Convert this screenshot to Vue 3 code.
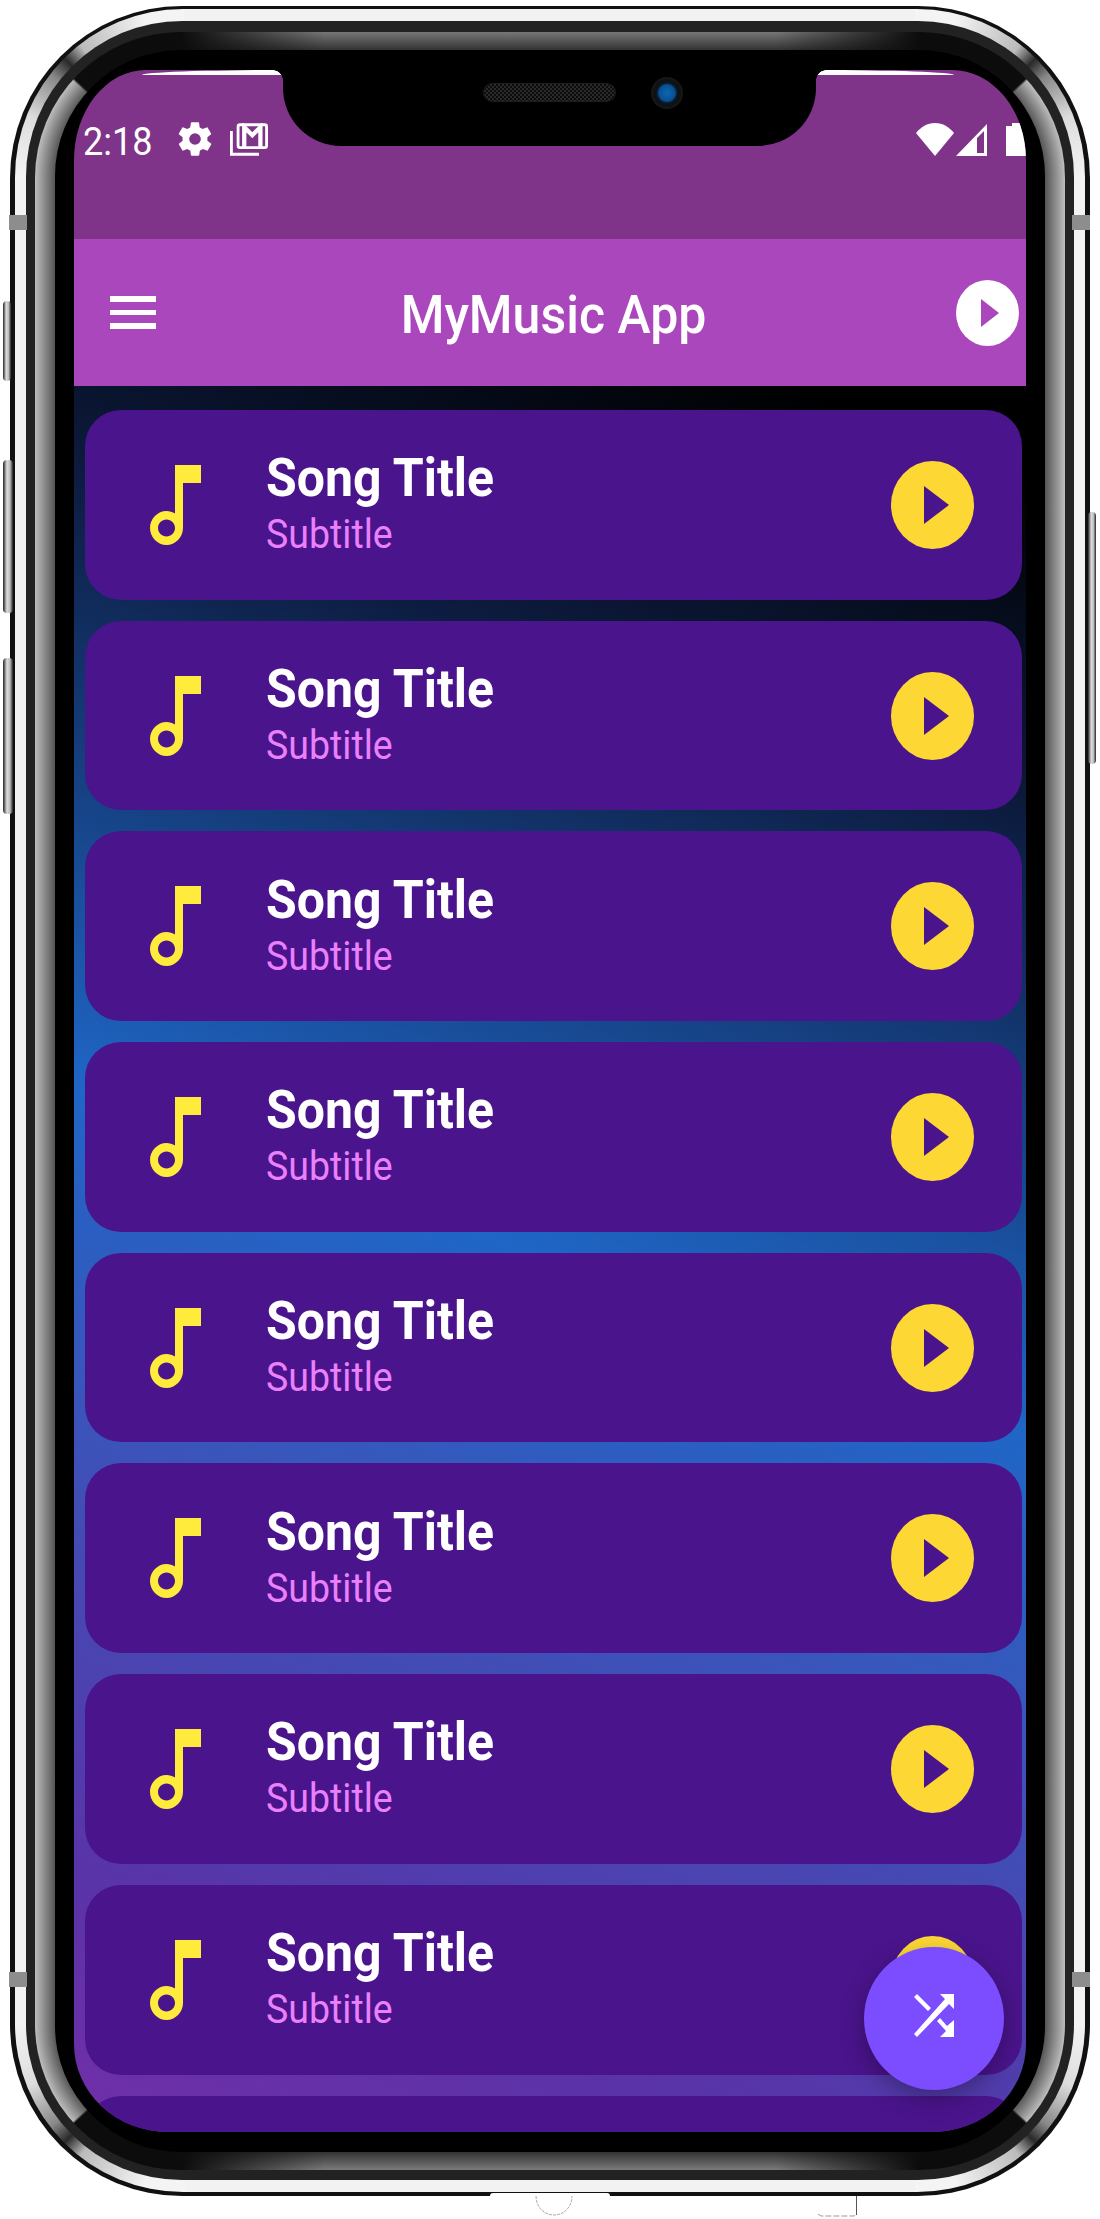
<template>
  <div class="page">
    <div class="phone">
      <span class="side btn-a"></span>
      <span class="side btn-b"></span>
      <span class="side btn-c"></span>
      <span class="side btn-d"></span>
      <span class="band band-tl"></span>
      <span class="band band-tr"></span>
      <span class="band band-bl"></span>
      <span class="band band-br"></span>
      <span class="chin"></span>
      <svg class="leftover" viewBox="0 0 330 24">
        <path
          fill="none"
          stroke="#aaa"
          stroke-width="1"
          stroke-dasharray="3 1"
          d="M1 0c0 11 8 19 18 19s18-8 18-19"
        />
        <path
          fill="none"
          stroke="#999"
          stroke-width="1"
          stroke-dasharray="6 2"
          d="M283 18l3 2h33l3-2"
        />
        <path fill="none" stroke="#555" stroke-width="1" d="M321.500 0v19" />
      </svg>

      <div class="metal">
        <div class="dark-ring">
          <div class="glass">
            <div class="bezel">
              <div class="screen">
                <div class="notch">
                  <span class="speaker"></span>
                  <span class="camera"></span>
                </div>

                <div class="status">
                  <span class="time">2:18</span>
                  <svg class="st-icon gear" viewBox="0 0 24 24">
                    <path
                      fill="#fff"
                      d="M19.4 13c.04-.32.1-.66.1-1s-.06-.68-.1-1l2.1-1.65c.2-.15.25-.42.12-.64l-2-3.46c-.12-.22-.38-.3-.6-.22l-2.5 1c-.5-.4-1.08-.73-1.7-.98l-.37-2.65A.5.5 0 0 0 14 2h-4a.5.5 0 0 0-.5.42l-.37 2.65c-.62.25-1.2.58-1.7.98l-2.5-1c-.22-.08-.48 0-.6.22l-2 3.46c-.13.22-.08.49.12.64L4.6 11c-.04.32-.1.66-.1 1s.06.68.1 1l-2.1 1.65c-.2.15-.25.42-.12.64l2 3.46c.12.22.38.3.6.22l2.5-1c.5.4 1.08.73 1.7.98l.37 2.65c.05.24.26.42.5.42h4c.24 0 .45-.18.5-.42l.37-2.65c.62-.25 1.2-.58 1.7-.98l2.5 1c.22.08.48 0 .6-.22l2-3.46c.13-.22.08-.49-.12-.64L19.4 13zM12 15.5a3.5 3.5 0 1 1 0-7 3.5 3.5 0 0 1 0 7z"
                    />
                  </svg>
                  <svg class="st-icon mail" viewBox="0 0 40 34">
                    <rect
                      x="8.500"
                      y="1.500"
                      width="30"
                      height="24"
                      rx="2"
                      fill="none"
                      stroke="#fff"
                      stroke-width="3"
                    />
                    <path
                      fill="none"
                      stroke="#fff"
                      stroke-width="4.500"
                      d="M15 25V4l8.500 8.500L32 4v21"
                    />
                    <path fill="none" stroke="#fff" stroke-width="3" d="M1.500 8v24.500h29" />
                  </svg>
                  <span class="st-space"></span>
                  <svg class="st-icon wifi" viewBox="0 0 38 33">
                    <path fill="#fff" d="M19 33L0 10C5 4 11 0 19 0s14 4 19 10L19 33z" />
                  </svg>
                  <svg class="st-icon signal" viewBox="0 0 31 32">
                    <path
                      fill="#fff"
                      fill-rule="evenodd"
                      d="M31 0v32H0L31 0zM28 7L21 14v15h7V7z"
                    />
                  </svg>
                  <svg class="st-icon battery" viewBox="0 0 22 33">
                    <path fill="#fff" d="M6 0h9v3h7v30H0V3h6V0z" />
                  </svg>
                </div>

                <div class="appbar">
                  <span class="menu"><i></i><i></i><i></i></span>
                  <h1 class="title">MyMusic App</h1>
                  <span class="bar-play">
                    <svg viewBox="0 0 63 66">
                      <path fill="#ab47bc" d="M25 19v28l18-14z" />
                    </svg>
                  </span>
                </div>

                <div class="list">
                  <div v-for="n in 9" :key="n" class="card">
                    <svg class="note" viewBox="0 0 51 80">
                      <path
                        fill="#ffeb3b"
                        fill-rule="evenodd"
                        d="M25 0h26v18H33v45c0 9.400-7.600 17-16.500 17S0 72.400 0 63s7.600-17 16.500-17c3.100 0 6 .9 8.500 2.500V0zM16.500 54.500C11.800 54.500 8 58.300 8 63s3.800 8.500 8.500 8.500S25 67.700 25 63s-3.800-8.500-8.500-8.500z"
                      />
                    </svg>
                    <div class="text">
                      <div class="song">Song Title</div>
                      <div class="sub">Subtitle</div>
                    </div>
                    <span class="play">
                      <svg viewBox="0 0 83 88">
                        <path fill="#4a148c" d="M33 25v38l25-19z" />
                      </svg>
                    </span>
                  </div>
                </div>

                <button class="fab">
                  <svg viewBox="0 0 40 43">
                    <path
                      fill="#fff"
                      d="M0 3l3-3 14 14-3 3zM26 0h14v15l-5-5L3 43l-3-3L31 5zM26 24l7 8 7-6v17H26l6-6-9-10z"
                    />
                  </svg>
                </button>
              </div>
            </div>
          </div>
        </div>
      </div>
    </div>
  </div>
</template>

<script setup>
// nothing dynamic here, the list is just nine copies of the same row
</script>

<style>
html,
body {
  margin: 0;
  background: #fff;
}
</style>

<style scoped>
.page {
  width: 1100px;
  height: 2219px;
  padding: 6px 10px 0;
  box-sizing: border-box;
  font-family: Roboto, "Liberation Sans", sans-serif;
}

/* device shell, one ring inside the other */
.phone {
  position: relative;
  height: 2190px;
  padding: 3px 5px 4px;
  box-sizing: border-box;
  background: #111;
  border-radius: 172px;
}
.metal {
  height: 100%;
  padding: 12px 11px;
  box-sizing: border-box;
  border-radius: 168px;
  background:
    conic-gradient(from 270deg at 100% 100%, #f4f4f4 0, #ddd 22deg, #888 38deg, #2a2a2a 45deg, #bbb 52deg, #f4f4f4 76deg) top left / 170px 170px no-repeat,
    conic-gradient(from 0deg at 0 100%, #f4f4f4 14deg, #bbb 38deg, #2a2a2a 45deg, #888 52deg, #ddd 68deg, #f4f4f4 90deg) top right / 170px 170px no-repeat,
    conic-gradient(from 180deg at 100% 0, #f4f4f4 14deg, #bbb 38deg, #2a2a2a 45deg, #888 52deg, #ddd 68deg, #f4f4f4 90deg) bottom left / 170px 170px no-repeat,
    conic-gradient(from 90deg at 0 0, #f4f4f4 0, #ddd 22deg, #888 38deg, #2a2a2a 45deg, #bbb 52deg, #f4f4f4 76deg) bottom right / 170px 170px no-repeat,
    #f2f2f2;
}
.dark-ring {
  height: 100%;
  padding: 11px 9px 10px;
  box-sizing: border-box;
  background: #222;
  border-radius: 156px;
}
.glass {
  height: 100%;
  padding: 18px 20px;
  box-sizing: border-box;
  border-radius: 146px;
  background:
    conic-gradient(from 270deg at 100% 100%, transparent 42deg, #0c0c0c 43deg) top left / 146px 146px no-repeat,
    conic-gradient(from 0deg at 0 100%, #0c0c0c 47deg, transparent 48deg) top right / 146px 146px no-repeat,
    conic-gradient(from 180deg at 100% 0, #0c0c0c 47deg, transparent 48deg) bottom left / 146px 146px no-repeat,
    conic-gradient(from 90deg at 0 0, transparent 42deg, #0c0c0c 43deg) bottom right / 146px 146px no-repeat,
    radial-gradient(circle at 100% 100%, #555 126px, #bdbdbd 146px) top left / 146px 146px no-repeat,
    radial-gradient(circle at 0 100%, #555 126px, #bdbdbd 146px) top right / 146px 146px no-repeat,
    radial-gradient(circle at 100% 0, #555 126px, #bdbdbd 146px) bottom left / 146px 146px no-repeat,
    radial-gradient(circle at 0 0, #555 126px, #bdbdbd 146px) bottom right / 146px 146px no-repeat,
    linear-gradient(90deg, #0c0c0c 146px, transparent 290px, transparent calc(100% - 290px), #0c0c0c calc(100% - 146px)) top / 100% 18px no-repeat,
    linear-gradient(90deg, #0c0c0c 146px, transparent 290px, transparent calc(100% - 290px), #0c0c0c calc(100% - 146px)) bottom / 100% 18px no-repeat,
    linear-gradient(180deg, #777 0, #333 18px) top / 100% 18px no-repeat,
    linear-gradient(180deg, #333 0, #7a7a7a 18px) bottom / 100% 18px no-repeat,
    linear-gradient(90deg, #bdbdbd 0, #555 20px) left / 20px 100% no-repeat,
    linear-gradient(270deg, #bdbdbd 0, #555 20px) right / 20px 100% no-repeat,
    #333;
}
.bezel {
  height: 100%;
  padding: 20px 19px;
  box-sizing: border-box;
  background: #000;
  border-radius: 126px;
}

/* antenna bands on the edge */
.band {
  position: absolute;
  width: 18px;
  height: 15px;
  background: #8d8d8d;
  z-index: 1;
}
.band-tl {
  left: -1px;
  top: 209px;
}
.band-tr {
  right: 0;
  top: 209px;
}
.band-bl {
  left: -1px;
  top: 1966px;
}
.band-br {
  right: 0;
  top: 1966px;
}

/* buttons sticking out of the shell */
.side {
  position: absolute;
  border-radius: 4px;
  background: linear-gradient(90deg, #222, #ddd 40%, #bbb 70%, #222);
}
.btn-a {
  left: -7px;
  top: 295px;
  width: 8px;
  height: 80px;
}
.btn-b {
  left: -7px;
  top: 454px;
  width: 10px;
  height: 153px;
}
.btn-c {
  left: -7px;
  top: 652px;
  width: 10px;
  height: 156px;
}
.btn-d {
  right: -6px;
  top: 506px;
  width: 8px;
  height: 252px;
}

/* bits of the device mockup below the shell */
.chin {
  position: absolute;
  left: 480px;
  bottom: 0;
  width: 120px;
  height: 3px;
  background: #fff;
  border-radius: 3px 3px 0 0;
  z-index: 1;
}
.leftover {
  position: absolute;
  left: 525px;
  top: 2190px;
  width: 330px;
  height: 24px;
}

/* screen */
.screen {
  position: relative;
  display: flex;
  flex-direction: column;
  height: 100%;
  overflow: hidden;
  border-radius: 72px 74px 94px 94px / 90px 90px 88px 88px;
}
.screen::before,
.screen::after {
  content: "";
  position: absolute;
  top: 0;
  height: 5px;
  background: #fff;
  z-index: 1;
}
.screen::before {
  left: 68px;
  width: 142px;
  border-top-left-radius: 100%;
}
.screen::after {
  left: 742px;
  width: 138px;
  border-top-right-radius: 100%;
}
.notch {
  position: absolute;
  top: 0;
  left: 209px;
  width: 533px;
  height: 76px;
  background: #000;
  border-radius: 0 0 58px 58px;
  z-index: 2;
}
.notch::before,
.notch::after {
  content: "";
  position: absolute;
  top: 0;
  width: 10px;
  height: 10px;
}
.notch::before {
  left: -10px;
  background: radial-gradient(circle at 0 100%, transparent 9.500px, #000 10px);
}
.notch::after {
  right: -10px;
  background: radial-gradient(circle at 100% 100%, transparent 9.500px, #000 10px);
}
.speaker {
  position: absolute;
  left: 200px;
  top: 13px;
  width: 133px;
  height: 19px;
  box-sizing: border-box;
  border: 1px solid #1d1d1d;
  border-radius: 10px;
  background: repeating-conic-gradient(#2a2a2a 0 25%, #0c0c0c 0 50%) 0 0 / 4px 4px;
}
.camera {
  position: absolute;
  left: 368px;
  top: 7px;
  width: 32px;
  height: 32px;
  border-radius: 50%;
  background: radial-gradient(circle, #0d66b8 0, #0a4f90 8px, #061a2c 10px, #0e0f11 12px, #17181a 16px);
}

.status {
  display: flex;
  align-items: flex-start;
  flex: none;
  height: 169px;
  padding: 51px 0 0 9px;
  box-sizing: border-box;
  background: #7f348a;
  color: #fff;
}
.time {
  font-size: 36px;
  line-height: 42px;
  transform: scaleY(1.06);
}
.st-icon {
  display: block;
  flex: none;
}
.gear {
  width: 40px;
  height: 40px;
  margin: -2px 0 0 23px;
}
.mail {
  width: 38px;
  height: 33px;
  margin: 2px 0 0 15px;
}
.st-space {
  flex: 1;
}
.wifi {
  width: 38px;
  height: 33px;
  margin: 2px 0 0 0;
}
.signal {
  width: 31px;
  height: 32px;
  margin: 3px 0 0 2px;
}
.battery {
  width: 22px;
  height: 33px;
  margin: 2px -2px 0 19px;
}

.appbar {
  display: flex;
  align-items: center;
  justify-content: space-between;
  flex: none;
  height: 147px;
  padding: 0 7px 0 36px;
  box-sizing: border-box;
  background: #ab47bc;
}
.menu {
  display: flex;
  flex-direction: column;
  gap: 8px;
  width: 46px;
}
.menu i {
  display: block;
  height: 5.500px;
  background: #fff;
}
.title {
  margin: 5px 5px 0 0;
  font-size: 50px;
  font-weight: 500;
  line-height: 60px;
  color: #fff;
  transform: scaleY(1.06);
}
.bar-play {
  display: block;
  width: 63px;
  height: 66px;
  border-radius: 50%;
  background: #fff;
}
.bar-play svg,
.play svg {
  display: block;
  width: 100%;
  height: 100%;
}

.list {
  flex: 1;
  display: flex;
  flex-direction: column;
  gap: 21px;
  padding: 24px 4px 0 11px;
  overflow: hidden;
  background: linear-gradient(200deg, #000 4%, #0c1a3c 20%, #1f66c6 50%, #3a55ba 65%, #5a33a8 88%, #7a2da8 104%);
}
.card {
  display: flex;
  align-items: center;
  flex: none;
  height: 189.700px;
  padding: 0 48px 0 65px;
  box-sizing: border-box;
  background: #4a148c;
  border-radius: 36px;
}
.note {
  width: 51px;
  height: 80px;
  flex: none;
}
.text {
  flex: 1;
  margin-left: 65px;
  padding-bottom: 2px;
}
.song {
  position: relative;
  top: -1px;
  font-size: 50px;
  font-weight: 700;
  line-height: 54px;
  color: #fff;
  transform: scaleY(1.06);
}
.sub {
  margin-top: 7px;
  font-size: 37.500px;
  line-height: 42px;
  color: #ea80fc;
  transform: scaleY(1.06);
}
.play {
  display: block;
  flex: none;
  width: 83px;
  height: 88px;
  border-radius: 50%;
  background: #fdd835;
}

.fab {
  position: absolute;
  left: 790px;
  top: 1877px;
  display: flex;
  align-items: center;
  justify-content: center;
  width: 140px;
  height: 143px;
  padding: 0;
  border: none;
  border-radius: 50%;
  background: #7c4dff;
  box-shadow: 0 8px 24px rgba(0, 0, 0, 0.3);
}
.fab svg {
  width: 40px;
  height: 43px;
  margin-bottom: 6px;
}
</style>
